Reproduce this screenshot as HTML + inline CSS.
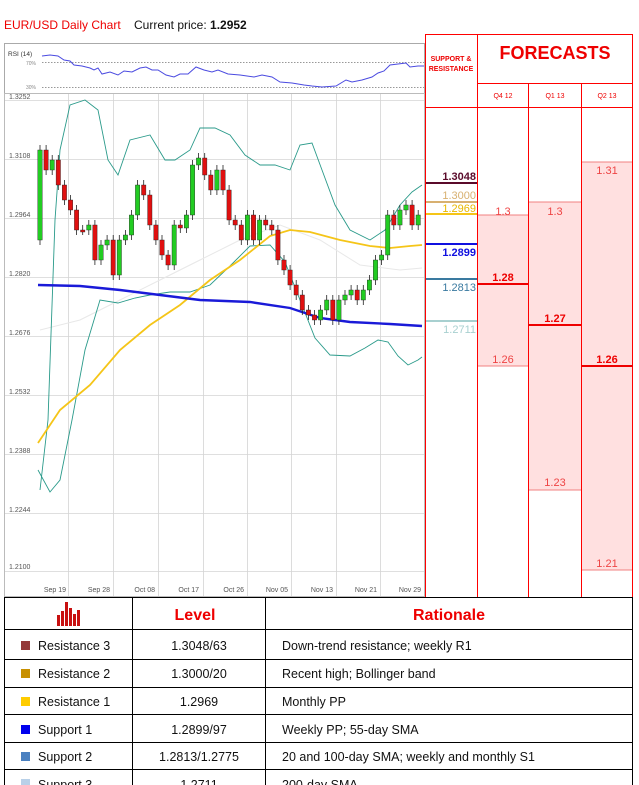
<!DOCTYPE html>
<html><head><meta charset="utf-8"><style>
body{margin:0;width:639px;height:785px;overflow:hidden;background:#fff;font-family:"Liberation Sans",sans-serif}
svg{position:absolute;left:0;top:0}
</style></head><body>
<svg width="639" height="785" viewBox="0 0 639 785" font-family="Liberation Sans, sans-serif">
<text x="4" y="29" font-size="12" fill="#e00">EUR/USD Daily Chart</text>
<text x="134" y="29" font-size="12" fill="#111">Current price: <tspan font-weight="bold">1.2952</tspan></text>
<!-- RSI -->
<rect x="4.5" y="43.5" width="420" height="63" fill="#fff" stroke="#aaa"/>
<text x="8" y="56" font-size="6.5" fill="#333">RSI (14)</text>
<text x="26" y="65" font-size="5" fill="#888">70%</text>
<text x="26" y="89" font-size="5" fill="#888">30%</text>
<line x1="42" y1="62.5" x2="424" y2="62.5" stroke="#777" stroke-dasharray="1.5,1.5" stroke-width="0.8"/>
<line x1="42" y1="87.5" x2="424" y2="87.5" stroke="#777" stroke-dasharray="1.5,1.5" stroke-width="0.8"/>
<polyline fill="none" stroke="#4a4ae0" stroke-width="1" points="42,56 50,55 58,56 64,60 70,61 74,65 82,66 90,68 94,70 98,68 102,74 110,72 118,75 124,71 132,72 140,68 146,67 152,70 158,70 166,75 174,77 180,74 188,74 196,67 204,70 212,72 218,70 228,74 240,75 254,77 262,75 272,77 280,82 292,83 304,85 312,86 322,87 336,86 346,80 352,82 362,80 372,77 378,73 384,71 390,65 398,64 406,63 410,67 418,66 424,66"/>
<!-- main chart -->
<rect x="4.5" y="93.5" width="420" height="503" fill="#fff" stroke="#bbb"/>
<g id="grid" stroke="#d4d4d4" stroke-width="0.8"></g>
<g font-size="7" fill="#555">
<text x="9" y="99">1.3252</text><text x="9" y="158">1.3108</text><text x="9" y="217">1.2964</text><text x="9" y="276">1.2820</text><text x="9" y="335">1.2676</text><text x="9" y="394">1.2532</text><text x="9" y="453">1.2388</text><text x="9" y="512">1.2244</text><text x="9" y="569">1.2100</text>
</g>
<g font-size="7" fill="#555" text-anchor="end">
<text x="66" y="592">Sep 19</text><text x="110" y="592">Sep 28</text><text x="155" y="592">Oct 08</text><text x="199" y="592">Oct 17</text><text x="244" y="592">Oct 26</text><text x="288" y="592">Nov 05</text><text x="333" y="592">Nov 13</text><text x="377" y="592">Nov 21</text><text x="421" y="592">Nov 29</text>
</g>
<polyline fill="none" stroke="#e8e8e8" stroke-width="1" points="40,330 80,320 120,300 160,280 200,260 240,240 280,225 320,240 360,265 400,270 422,268"/>
<polyline fill="none" stroke="#2a9a8a" stroke-width="0.9" points="40,490 48,420 55,220 60,150 70,105 85,100 98,110 108,160 118,175 130,140 150,135 165,160 175,160 190,150 200,128 215,128 230,135 245,155 260,165 275,165 290,170 300,145 312,143 322,170 335,205 350,230 370,240 385,230 400,205 412,192 422,185"/>
<polyline fill="none" stroke="#2a9a8a" stroke-width="0.9" points="38,470 50,492 60,480 72,420 85,350 100,300 118,303 135,298 150,295 170,292 190,292 210,285 230,266 250,246 270,245 285,262 300,300 315,338 330,355 350,356 365,348 378,340 388,342 398,356 408,365 418,360 422,357"/>
<polyline fill="none" stroke="#f5c518" stroke-width="1.8" points="38,443 60,410 90,385 120,350 150,325 180,305 210,280 240,260 270,236 290,230 310,232 340,240 370,246 390,248 410,246 422,245"/>
<polyline fill="none" stroke="#1a1ad8" stroke-width="2.4" points="38,285 80,286 120,290 160,295 200,300 250,302 290,308 320,318 350,322 390,324 422,326"/>
<g id="candles"></g>
<!-- right panel -->
<rect x="477" y="215" width="51" height="151" fill="#ffe0e0"/>
<rect x="528" y="202" width="53" height="288" fill="#ffe0e0"/>
<rect x="581" y="162" width="52" height="408" fill="#ffe0e0"/>
<g stroke="#f08080" stroke-width="1" fill="none">
<line x1="477" y1="215" x2="528" y2="215"/><line x1="477" y1="366" x2="528" y2="366"/>
<line x1="528" y1="202" x2="581" y2="202"/><line x1="528" y1="490" x2="581" y2="490"/>
<line x1="581" y1="162" x2="633" y2="162"/><line x1="581" y1="570" x2="633" y2="570"/>
</g>
<g stroke="#f00" stroke-width="1" fill="none">
<line x1="425.5" y1="34" x2="425.5" y2="597"/><line x1="477.5" y1="34" x2="477.5" y2="597"/>
<line x1="528.5" y1="84" x2="528.5" y2="597"/><line x1="581.5" y1="84" x2="581.5" y2="597"/>
<line x1="632.5" y1="34" x2="632.5" y2="597"/>
<line x1="425" y1="34.5" x2="633" y2="34.5"/><line x1="477" y1="83.5" x2="633" y2="83.5"/><line x1="425" y1="107.5" x2="633" y2="107.5"/>
</g>
<text x="451" y="61" font-size="7" font-weight="bold" fill="#e00" text-anchor="middle">SUPPORT &amp;</text>
<text x="451" y="71" font-size="7" font-weight="bold" fill="#e00" text-anchor="middle">RESISTANCE</text>
<text x="555" y="59" font-size="18" font-weight="bold" fill="#e00" text-anchor="middle">FORECASTS</text>
<g font-size="7" fill="#e00" text-anchor="middle"><text x="503" y="98">Q4 12</text><text x="555" y="98">Q1 13</text><text x="607" y="98">Q2 13</text></g>
<g font-size="11" fill="#e44" text-anchor="middle">
<text x="503" y="215">1.3</text><text x="555" y="215">1.3</text><text x="607" y="174">1.31</text>
<text x="503" y="363">1.26</text><text x="555" y="486">1.23</text><text x="607" y="567">1.21</text>
<g font-weight="bold" fill="#e00"><text x="503" y="281">1.28</text><text x="555" y="322">1.27</text><text x="607" y="363">1.26</text></g>
</g>
<g stroke-width="2"><line x1="477" y1="284" x2="528" y2="284" stroke="#e00"/><line x1="528" y1="325" x2="581" y2="325" stroke="#e00"/><line x1="581" y1="366" x2="633" y2="366" stroke="#e00"/></g>
<g stroke-width="2">
<line x1="426" y1="183" x2="477" y2="183" stroke="#5a0a2a"/>
<line x1="426" y1="202" x2="477" y2="202" stroke="#d8b070"/>
<line x1="426" y1="214" x2="477" y2="214" stroke="#f5c518"/>
<line x1="426" y1="244" x2="477" y2="244" stroke="#1010e0"/>
<line x1="426" y1="279" x2="477" y2="279" stroke="#3a7aa0"/>
<line x1="426" y1="321" x2="477" y2="321" stroke="#a8d0d0"/>
</g>
<g font-size="11" text-anchor="end" font-weight="bold">
<text x="476" y="180" fill="#5a0a2a">1.3048</text>
<text x="476" y="199" fill="#d8b070" font-weight="normal">1.3000</text>
<text x="476" y="212" fill="#e8b800" font-weight="normal">1.2969</text>
<text x="476" y="256" fill="#1010e0">1.2899</text>
<text x="476" y="291" fill="#3a7aa0" font-weight="normal">1.2813</text>
<text x="476" y="333" fill="#a8d0d0" font-weight="normal">1.2711</text>
</g>
<!-- table -->
<g stroke="#000" stroke-width="1" fill="none">
<line x1="4" y1="597.5" x2="633" y2="597.5"/>
<line x1="4" y1="629.5" x2="633" y2="629.5"/><line x1="4" y1="659.5" x2="633" y2="659.5"/><line x1="4" y1="687.5" x2="633" y2="687.5"/><line x1="4" y1="714.5" x2="633" y2="714.5"/><line x1="4" y1="742.5" x2="633" y2="742.5"/><line x1="4" y1="769.5" x2="633" y2="769.5"/>
<line x1="4.5" y1="597" x2="4.5" y2="785"/><line x1="132.5" y1="597" x2="132.5" y2="785"/><line x1="265.5" y1="597" x2="265.5" y2="785"/><line x1="632.5" y1="597" x2="632.5" y2="785"/>
</g>
<g fill="#c81010"><rect x="57" y="615" width="3" height="11"/><rect x="61" y="611" width="3" height="15"/><rect x="65" y="602" width="3" height="24"/><rect x="69" y="608" width="3" height="18"/><rect x="73" y="614" width="3" height="12"/><rect x="77" y="610" width="3" height="16"/></g>
<g font-size="16" font-weight="bold" fill="#e00" text-anchor="middle"><text x="195" y="620">Level</text><text x="449" y="620">Rationale</text></g>
<g font-size="12.5" fill="#111">
<rect x="21" y="641" width="9" height="9" fill="#943a3a"/><text x="38" y="650">Resistance 3</text><text x="199" y="650" text-anchor="middle">1.3048/63</text><text x="282" y="650">Down-trend resistance; weekly R1</text>
<rect x="21" y="669" width="9" height="9" fill="#c89000"/><text x="38" y="678">Resistance 2</text><text x="199" y="678" text-anchor="middle">1.3000/20</text><text x="282" y="678">Recent high; Bollinger band</text>
<rect x="21" y="697" width="9" height="9" fill="#ffcc00"/><text x="38" y="706">Resistance 1</text><text x="199" y="706" text-anchor="middle">1.2969</text><text x="282" y="706">Monthly PP</text>
<rect x="21" y="725" width="9" height="9" fill="#0000ee"/><text x="38" y="734">Support 1</text><text x="199" y="734" text-anchor="middle">1.2899/97</text><text x="282" y="734">Weekly PP; 55-day SMA</text>
<rect x="21" y="752" width="9" height="9" fill="#4a80c0"/><text x="38" y="761">Support 2</text><text x="199" y="761" text-anchor="middle">1.2813/1.2775</text><text x="282" y="761">20 and 100-day SMA; weekly and monthly S1</text>
<rect x="21" y="779" width="9" height="9" fill="#b8d0e8"/><text x="38" y="789">Support 3</text><text x="199" y="789" text-anchor="middle">1.2711</text><text x="282" y="789">200-day SMA</text>
</g>
</svg>
<script>
var ns="http://www.w3.org/2000/svg";
function el(t,a,p){var e=document.createElementNS(ns,t);for(var k in a)e.setAttribute(k,a[k]);p.appendChild(e);return e;}
var g=document.getElementById("grid");
[100,159,218,277,336,395,454,513,571].forEach(function(y){el("line",{x1:5,x2:424,y1:y+.5,y2:y+.5},g);});
[68,113,158,203,247,291,336,380].forEach(function(x){el("line",{x1:x+.5,x2:x+.5,y1:94,y2:596},g);});
var c=[240,150,170,160,185,200,210,230,230,225,260,245,240,275,240,235,215,185,195,225,240,255,265,225,228,215,165,158,175,190,170,190,220,225,240,215,240,220,225,230,260,270,285,295,310,315,320,310,300,320,300,295,290,300,290,280,260,255,215,225,210,205,225,215];
var cg=document.getElementById("candles");
for(var i=1;i<c.length;i++){var x=40+(i-1)*6.1,o=c[i-1],cl=c[i];var up=cl<o;var t=Math.min(o,cl),b=Math.max(o,cl);
el("line",{x1:x,x2:x,y1:t-5,y2:b+5,stroke:"#222","stroke-width":0.8},cg);
el("rect",{x:x-2.2,y:t,width:4.4,height:Math.max(b-t,2),fill:up?"#22cc22":"#e01010",stroke:"#222","stroke-width":0.4},cg);}
</script>
</body></html>
